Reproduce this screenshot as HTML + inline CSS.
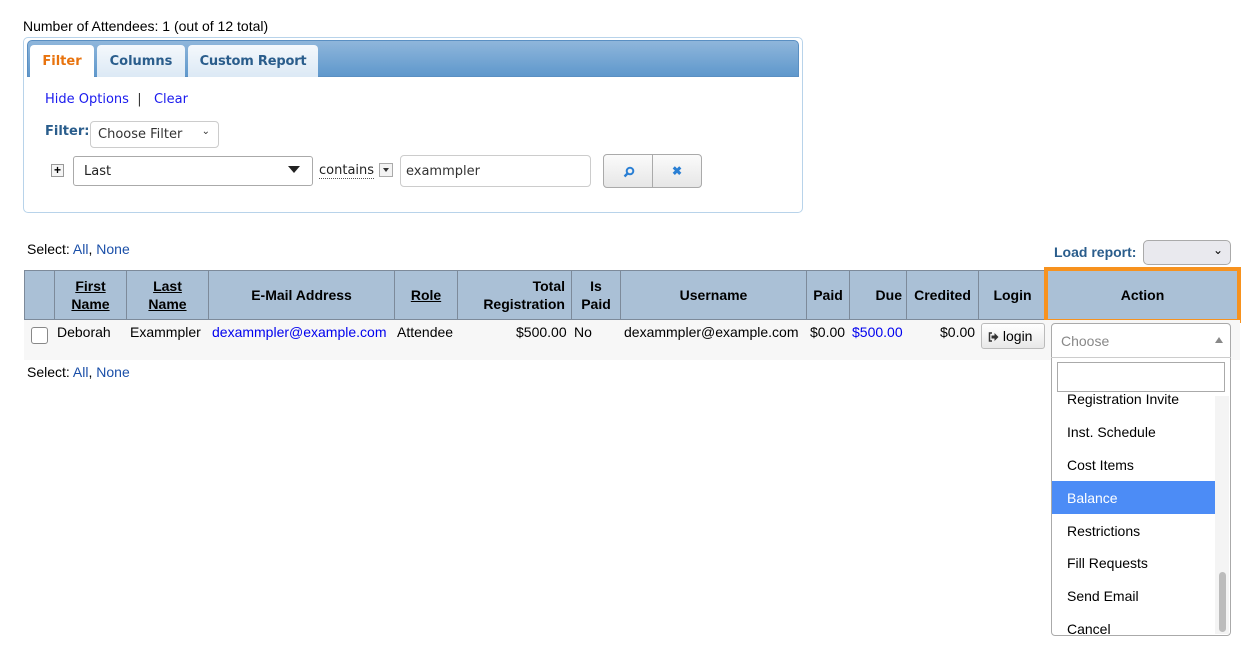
<!DOCTYPE html>
<html><head><meta charset="utf-8"><style>
*{box-sizing:border-box}
body{margin:0;width:1257px;height:655px;background:#fff;font-family:"Liberation Sans",Arial,sans-serif;font-size:14px;color:#000;position:relative;overflow:hidden}
.a{position:absolute;white-space:nowrap}
.lk{color:#1a4fa8}
.bl{color:#0000ee}
.ver{font-family:"DejaVu Sans",sans-serif;font-size:13px}
.h{position:absolute;top:270px;height:50px;border-right:1px solid #7d8a9a;display:flex;align-items:center;justify-content:center;text-align:center;font-weight:bold;font-size:14px;line-height:18px}
.h u{text-decoration:underline}
</style></head><body>
<div class="a" style="left:23px;top:18px">Number of Attendees: 1 (out of 12 total)</div>

<div class="a" style="left:23px;top:37px;width:780px;height:176px;border:1px solid #b8d3ea;border-radius:5px;background:#fff"></div>
<div class="a" style="left:27px;top:40px;width:772px;height:37px;border-radius:5px 5px 0 0;background:linear-gradient(180deg,#8fb6db,#5f98cc);border:1px solid #5a8fc2"></div>
<div class="a ver" style="left:30px;top:45px;width:64px;height:33px;background:#fff;border-radius:4px 4px 0 0;color:#e8730e;font-weight:bold;text-align:center;line-height:33px">Filter</div>
<div class="a ver" style="left:97px;top:45px;width:88px;height:32px;background:linear-gradient(#f4f8fc,#dce9f5);border-radius:4px 4px 0 0;color:#2a5d8c;font-weight:bold;text-align:center;line-height:33px">Columns</div>
<div class="a ver" style="left:188px;top:45px;width:130px;height:32px;background:linear-gradient(#f4f8fc,#dce9f5);border-radius:4px 4px 0 0;color:#2a5d8c;font-weight:bold;text-align:center;line-height:33px;letter-spacing:-0.2px">Custom Report</div>
<div class="a ver" style="left:45px;top:92px;color:#1a1aee">Hide Options <span style="color:#333">&nbsp;|&nbsp;</span> &nbsp;Clear</div>
<div class="a ver" style="left:45px;top:124px;color:#2a5d8c;font-weight:bold">Filter:</div>
<div class="a ver" style="left:90px;top:121px;width:129px;height:27px;border:1px solid #ccc;border-radius:4px;padding:5px 7px;color:#333">Choose Filter<span style="position:absolute;right:8px;top:4px;font-size:10px">⌄</span></div>
<div class="a" style="left:51px;top:164px;width:13px;height:13px;border:1px solid #999;background:#f5f5f5;font-size:12px;line-height:10px;text-align:center;font-weight:bold">+</div>
<div class="a ver" style="left:73px;top:156px;width:240px;height:30px;border:1px solid #aaa;border-radius:3px;padding:7px 10px;color:#222">Last<span style="position:absolute;right:12px;top:9px;width:0;height:0;border-left:6px solid transparent;border-right:6px solid transparent;border-top:7px solid #222"></span></div>
<div class="a ver" style="left:319px;top:163px;color:#222;border-bottom:1px dotted #555;line-height:15px">contains</div>
<div class="a" style="left:379px;top:163px;width:14px;height:14px;border:1px solid #aaa;background:#f3f3f3"><span style="position:absolute;left:3px;top:4px;border-left:3.5px solid transparent;border-right:3.5px solid transparent;border-top:4px solid #333"></span></div>
<div class="a ver" style="left:400px;top:155px;width:191px;height:32px;border:1px solid #ccc;border-radius:4px;padding:8px 5px;color:#333">exammpler</div>
<div class="a" style="left:603px;top:154px;width:50px;height:34px;border:1px solid #aaa;border-radius:4px 0 0 4px;background:linear-gradient(#fbfbfb,#e6e6e6)"><svg width="12" height="12" style="position:absolute;left:19px;top:11px" viewBox="0 0 12 12"><circle cx="7" cy="5" r="3.3" fill="none" stroke="#2a7fd4" stroke-width="2"/><path d="M4.6 7.4 1.5 10.5" stroke="#2a7fd4" stroke-width="2.4"/></svg></div>
<div class="a" style="left:652px;top:154px;width:50px;height:34px;border:1px solid #aaa;border-radius:0 4px 4px 0;background:linear-gradient(#fbfbfb,#e6e6e6);color:#2a7fd4;text-align:center;line-height:32px;font-size:12px;font-weight:bold">✖</div>

<div class="a" style="left:27px;top:241px">Select: <span class="lk">All</span>, <span class="lk">None</span></div>
<div class="a" style="left:1054px;top:244px;color:#2a5d8c;font-weight:bold">Load report:</div>
<div class="a" style="left:1143px;top:240px;width:88px;height:25px;border:1px solid #aaa;border-radius:5px;background:#e9e9ee"><span style="position:absolute;right:7px;top:2px;font-size:12px">⌄</span></div>

<div class="a" style="left:24px;top:270px;width:1216px;height:50px;background:#aac0d6;border:1px solid #7d8a9a"></div>
<div class="h" style="left:24px;width:31px"></div>
<div class="h" style="left:55px;width:72px"><u>First<br>Name</u></div>
<div class="h" style="left:127px;width:82px"><u>Last<br>Name</u></div>
<div class="h" style="left:209px;width:186px">E-Mail Address</div>
<div class="h" style="left:395px;width:63px"><u>Role</u></div>
<div class="h" style="left:458px;width:114px;justify-content:flex-end;text-align:right;padding-right:6px">Total<br>Registration</div>
<div class="h" style="left:572px;width:49px">Is<br>Paid</div>
<div class="h" style="left:621px;width:186px">Username</div>
<div class="h" style="left:807px;width:43px">Paid</div>
<div class="h" style="left:850px;width:57px;justify-content:flex-end;padding-right:4px">Due</div>
<div class="h" style="left:907px;width:72px">Credited</div>
<div class="h" style="left:979px;width:68px">Login</div>
<div class="a" style="left:1044px;top:267px;width:197px;height:56px;border:4px solid #f7921e;background:#aac0d6;display:flex;align-items:center;justify-content:center;font-weight:bold">Action</div>

<div class="a" style="left:24px;top:320px;width:1216px;height:40px;background:#f7f7f7"></div>
<div class="a" style="left:31px;top:327px;width:17px;height:17px;border:1px solid #888;border-radius:3px;background:#fff"></div>
<div class="a" style="left:57px;top:324px">Deborah</div>
<div class="a" style="left:130px;top:324px">Exammpler</div>
<div class="a bl" style="left:212px;top:324px">dexammpler@example.com</div>
<div class="a" style="left:397px;top:324px">Attendee</div>
<div class="a" style="left:516px;top:324px">$500.00</div>
<div class="a" style="left:574px;top:324px">No</div>
<div class="a" style="left:624px;top:324px">dexammpler@example.com</div>
<div class="a" style="left:810px;top:324px">$0.00</div>
<div class="a bl" style="left:852px;top:324px">$500.00</div>
<div class="a" style="left:940px;top:324px">$0.00</div>
<div class="a" style="left:981px;top:323px;width:64px;height:26px;border:1px solid #bbb;border-radius:3px;background:linear-gradient(#fff,#e8e8e8);font-size:14px;line-height:24px;padding-left:6px"><svg width="11" height="10" viewBox="0 0 11 10" style="vertical-align:-1px"><path d="M4 1H1.5v8H4" fill="none" stroke="#333" stroke-width="1.5"/><path d="M3.5 3.5h3V1l4 4-4 4V6.5h-3z" fill="#333"/></svg> login</div>
<div class="a" style="left:27px;top:364px">Select: <span class="lk">All</span>, <span class="lk">None</span></div>

<div class="a" style="left:1051px;top:323px;width:180px;height:313px;border:1px solid #aaa;border-radius:4px;background:#fff"></div>
<div class="a" style="left:1051px;top:323px;width:180px;height:35px;border-bottom:1px solid #ccc;color:#888;padding:10px 10px;font-size:14px">Choose<span style="position:absolute;right:8px;top:14px;border-left:4.5px solid transparent;border-right:4.5px solid transparent;border-bottom:6px solid #888"></span></div>
<div class="a" style="left:1057px;top:362px;width:168px;height:30px;border:1px solid #aaa"></div>
<div class="a" style="left:1215px;top:396px;width:14px;height:238px;background:#f4f4f4"></div>
<div class="a" style="left:1219px;top:572px;width:7px;height:60px;background:#bcbcbc;border-radius:4px"></div>
<div class="a" style="left:1052px;top:393px;width:163px;height:242px;overflow:hidden">
<div style="position:absolute;left:15px;top:-2px">Registration Invite</div>
<div style="position:absolute;left:15px;top:31px">Inst. Schedule</div>
<div style="position:absolute;left:15px;top:64px">Cost Items</div>
<div style="position:absolute;left:0;top:88px;width:163px;height:33px;background:#4c8cf6;color:#fff;padding:9px 15px">Balance</div>
<div style="position:absolute;left:15px;top:130px">Restrictions</div>
<div style="position:absolute;left:15px;top:162px">Fill Requests</div>
<div style="position:absolute;left:15px;top:195px">Send Email</div>
<div style="position:absolute;left:15px;top:228px">Cancel</div>
</div>
</body></html>
